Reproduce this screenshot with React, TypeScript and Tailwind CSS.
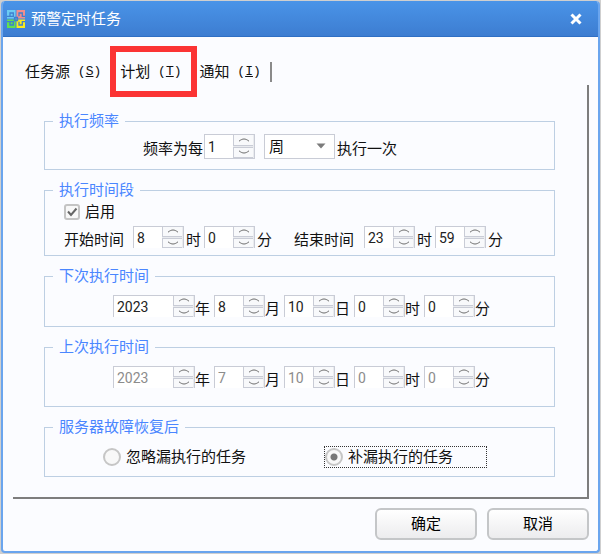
import { useState } from "react";

interface SpinnerProps {
  label: string;
  value: number;
  wide?: boolean;
  framed?: boolean;
  disabled?: boolean;
}

function Spinner({ label, value, wide, framed, disabled }: SpinnerProps) {
  const [current, setCurrent] = useState(String(value));

  function step(delta: number) {
    setCurrent((v) => String((Number(v) || 0) + delta));
  }

  return (
    <div
      className={`flex shrink-0 border border-[#c9ccd6] bg-white ${wide ? "w-[82px]" : "w-[51px]"} ${
        framed ? "h-[25px]" : "h-[22px] border-b-0"
      }`}
    >
      <input
        aria-label={label}
        value={current}
        disabled={disabled}
        onChange={(e) => setCurrent(e.target.value)}
        className="w-0 min-w-0 flex-1 bg-transparent pl-[3px] text-sm leading-5 text-[#222] outline-none disabled:text-[#8c8c8c]"
      />
      <div className="flex w-[21px] flex-col gap-px bg-[#e9ebef] pr-px">
        <button
          aria-label={`${label} +`}
          disabled={disabled}
          onClick={() => step(1)}
          className="flex flex-1 items-center justify-center border-b border-l border-[#c9ccd6] bg-[#f8f9fb]"
        >
          <svg className="h-1 w-3" viewBox="0 0 12 4" fill="none" stroke="#6a6a6a">
            <path d="M1 3.2C3 1.6 4.5 1 6 1s3 .6 5 2.2" />
          </svg>
        </button>
        <button
          aria-label={`${label} -`}
          disabled={disabled}
          onClick={() => step(-1)}
          className="flex flex-1 items-center justify-center border-b border-l border-t border-[#c9ccd6] bg-[#f8f9fb]"
        >
          <svg className="h-1 w-3" viewBox="0 0 12 4" fill="none" stroke="#6a6a6a">
            <path d="M1 .8C3 2.4 4.5 3 6 3s3-.6 5-2.2" />
          </svg>
        </button>
      </div>
    </div>
  );
}

function Group({ title, children }: { title: string; children: React.ReactNode }) {
  return (
    <fieldset className="min-w-0 border border-[#bdcfe3] pl-2">
      <legend className="px-1.5 leading-5 text-[#4a86ff]">{title}</legend>
      {children}
    </fieldset>
  );
}

function DateRow({ name, values, disabled }: { name: string; values: number[]; disabled?: boolean }) {
  const units = ["年", "月", "日", "时", "分"];

  return (
    <div className="flex items-center pl-[60px]">
      {units.map((unit, i) => (
        <div key={unit} className="flex items-center">
          <Spinner label={`${name} ${unit}`} value={values[i]} wide={i === 0} disabled={disabled} />
          <span className="w-[19px] pt-1.5">{unit}</span>
        </div>
      ))}
    </div>
  );
}

function Logo() {
  return (
    <svg className="h-5 w-5" viewBox="0 0 20 20" fill="none">
      <path fill="#6ccbf3" d="M1 1h8.5v8.5H1z" />
      <path fill="#f28d8c" d="M10.500 1H19v8.500h-8.500z" />
      <path fill="#62e04e" d="M1 10.500h8.500V19H1z" />
      <path fill="#f8ea1c" d="M10.500 10.500H19V19h-8.500z" />
      <g stroke="#3f7fcf" strokeWidth="1.3">
        <path d="M7.300 1v0M4 7V4h3.300v3.300H1M13 7.300V4h3.300v3.300H19" />
        <path d="M4 12.700v3.300h3.300v-3.300H1M13 12.700v3.300h3.300v-3.300H19" />
        <path d="M8.500 8.500h3v3h-3z" />
      </g>
    </svg>
  );
}

const tabs = [
  { name: "任务源", hotkey: "S" },
  { name: "计划", hotkey: "T" },
  { name: "通知", hotkey: "I" },
];

const radioClass =
  "size-[18px] shrink-0 appearance-none rounded-full border-2 border-[#c6c6c6] bg-[#f8f8f8] outline-none checked:bg-[radial-gradient(circle,#777_0_3px,#f8f8f8_4px)]";

const buttonClass =
  "h-8 w-[102px] rounded-[6px] border-2 border-[#c4c6c8] bg-linear-to-b from-white to-[#ececee] text-black";

export default function App() {
  const [tab, setTab] = useState("T");
  const [enabled, setEnabled] = useState(true);
  const [recovery, setRecovery] = useState("rerun");

  return (
    <div className="bg-[#cfcfcf] p-px font-['Roboto','Noto_Sans_CJK_SC',sans-serif] text-[15px] leading-5 text-[#111]">
      <div className="overflow-hidden rounded-[4px] border-b-2 border-l-2 border-r-2 border-[#6aa5ee] bg-[#fbfcff]">
        <header className="flex h-9 items-center justify-between border-b border-[#2f6fc4] bg-linear-to-b from-[#4a94e8] to-[#3d7dd1] pl-[3px] pr-4">
          <div className="flex items-center gap-[5px]">
            <Logo />
            <h1 className="text-white">预警定时任务</h1>
          </div>
          <button aria-label="关闭" className="text-white">
            <svg className="h-3 w-3" viewBox="0 0 12 12" stroke="currentColor" strokeWidth="3">
              <path d="M1.5 1.5l9 9M10.5 1.5l-9 9" />
            </svg>
          </button>
        </header>

        <main className="pb-[11px] pl-2.5 pr-[9px] pt-[9px]">
          <div role="tablist" className="flex h-[51px] items-center pl-px">
            {tabs.map(({ name, hotkey }) => (
              <button
                key={hotkey}
                role="tab"
                aria-selected={tab === hotkey}
                onClick={() => setTab(hotkey)}
                className={`flex items-center whitespace-pre ${
                  tab === hotkey ? "h-[51px] border-6 border-[#fb3434] pl-1 pr-[9px]" : "px-[3px] first:pl-[11px] first:pr-[9px]"
                }`}
              >
                {name}
                <span className="font-['Liberation_Mono',monospace] text-[13px]">
                  {" ("}
                  <u>{hotkey}</u>)
                </span>
              </button>
            ))}
            <span className="ml-1.5 h-5 w-0.5 bg-[#8a8a8a]" />
          </div>

          <section className="-mt-3 border-b-2 border-r-2 border-[#7d7d7d] pb-5 pl-[31px] pr-8 pt-[26px]">
            <div className="flex flex-col gap-2.5">
              <Group title="执行频率">
                <div className="flex items-center pb-2.5 pl-[90px] pt-[3px]">
                  <span className="w-[61px] pt-1">频率为每</span>
                  <Spinner label="频率" value={1} framed />
                  <div className="relative ml-[9px]">
                    <select
                      aria-label="周期"
                      className="block h-[25px] w-[71px] appearance-none border border-[#c9ccd6] bg-white pl-1 leading-5 outline-none"
                    >
                      <option>周</option>
                      <option>日</option>
                      <option>月</option>
                    </select>
                    <svg className="pointer-events-none absolute right-2 top-2 h-2 w-3" viewBox="0 0 12 8" fill="#7b7b7b">
                      <path d="M1.5 1.5h9L6 6.500z" />
                    </svg>
                  </div>
                  <span className="pl-0.5 pt-1">执行一次</span>
                </div>
              </Group>

              <Group title="执行时间段">
                <div className="flex flex-col gap-0.5 pb-[5px] pl-[11px] pt-0.5">
                  <label className="flex items-center gap-[5px]">
                    <span className="relative flex">
                      <input
                        type="checkbox"
                        checked={enabled}
                        onChange={(e) => setEnabled(e.target.checked)}
                        className="peer size-4 appearance-none rounded-[3px] border-2 border-[#c4c4c4] bg-[#f8f8f8]"
                      />
                      <svg
                        className="pointer-events-none absolute inset-0 hidden h-4 w-4 peer-checked:block"
                        viewBox="0 0 16 16"
                        fill="none"
                        stroke="#666"
                        strokeWidth="2"
                      >
                        <path d="M4 7.5l3 3.5 5.5-6.5" />
                      </svg>
                    </span>
                    启用
                  </label>
                  <div className="flex items-center">
                    <span className="w-[69px] pt-1.5">开始时间</span>
                    <Spinner label="开始时" value={8} />
                    <span className="w-5 pl-0.5 pt-1.5">时</span>
                    <Spinner label="开始分" value={0} />
                    <span className="w-[39px] pl-0.5 pt-1.5">分</span>
                    <span className="w-[70px] pt-1.5">结束时间</span>
                    <Spinner label="结束时" value={23} />
                    <span className="w-5 pl-0.5 pt-1.5">时</span>
                    <Spinner label="结束分" value={59} />
                    <span className="pl-0.5 pt-1.5">分</span>
                  </div>
                </div>
              </Group>

              <Group title="下次执行时间">
                <div className="pb-[7px] pt-[7px]">
                  <DateRow name="下次执行" values={[2023, 8, 10, 0, 0]} />
                </div>
              </Group>

              <Group title="上次执行时间">
                <div className="pb-4 pt-[7px]">
                  <DateRow name="上次执行" values={[2023, 7, 10, 0, 0]} disabled />
                </div>
              </Group>

              <Group title="服务器故障恢复后">
                <div className="flex items-center pb-2 pl-[50px] pt-[9px]">
                  <label className="flex w-[221px] items-center gap-[5px]">
                    <input
                      type="radio"
                      name="recovery"
                      checked={recovery === "skip"}
                      onChange={() => setRecovery("skip")}
                      className={radioClass}
                    />
                    忽略漏执行的任务
                  </label>
                  <label className="flex w-[163px] items-center gap-[5px] border border-dotted border-[#333]">
                    <input
                      type="radio"
                      name="recovery"
                      checked={recovery === "rerun"}
                      onChange={() => setRecovery("rerun")}
                      className={radioClass}
                    />
                    补漏执行的任务
                  </label>
                </div>
              </Group>
            </div>
          </section>

          <footer className="flex justify-end gap-2.5 pt-[9px]">
            <button className={buttonClass}>确定</button>
            <button className={buttonClass}>取消</button>
          </footer>
        </main>
      </div>
    </div>
  );
}
